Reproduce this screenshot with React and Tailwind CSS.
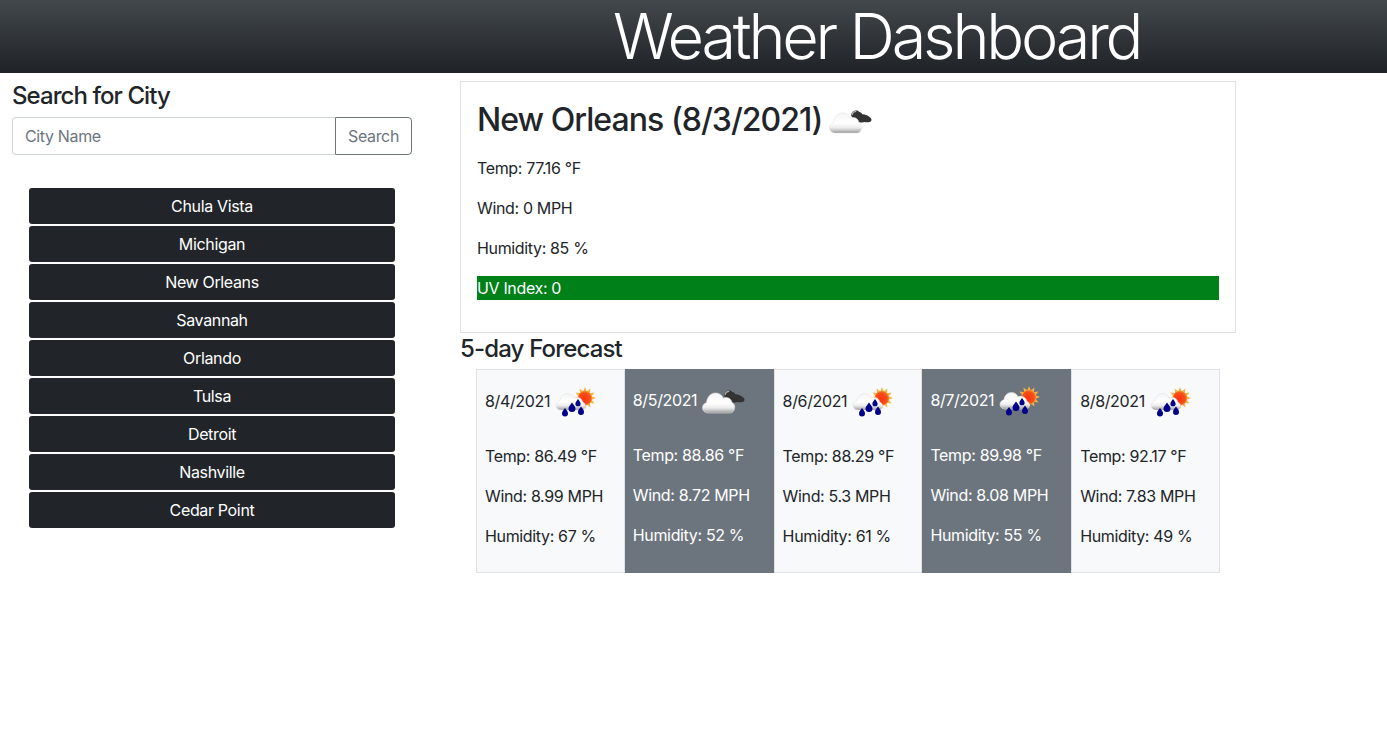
import React from 'react';

const cities = ['Chula Vista', 'Michigan', 'New Orleans', 'Savannah', 'Orlando', 'Tulsa', 'Detroit', 'Nashville', 'Cedar Point'];

const forecast = [
  { date: '8/4/2021', icon: 'rain', temp: '86.49', wind: '8.99', humidity: '67' },
  { date: '8/5/2021', icon: 'cloud', temp: '88.86', wind: '8.72', humidity: '52' },
  { date: '8/6/2021', icon: 'rain', temp: '88.29', wind: '5.3', humidity: '61' },
  { date: '8/7/2021', icon: 'rain', temp: '89.98', wind: '8.08', humidity: '55' },
  { date: '8/8/2021', icon: 'rain', temp: '92.17', wind: '7.83', humidity: '49' },
];

const RAIN_CLOUD = 'M11 29c-3 0-5-2-5-4.500 0-2.500 1.800-4.400 4-4.800 .5-4.200 3.500-7.200 7.500-7.200 3 0 5.500 1.600 6.500 4.400 1-.5 2-.6 3-.5 3 0 5.300 2 5.800 4.900 1.600.5 2.700 2 2.700 3.600 0 2.500-2 4.100-4 4.100z';
const BIG_CLOUD = 'M13 33c-3.200 0-5.500-2.300-5.500-5.200 0-2.600 1.700-4.600 4-5.100 .5-5.700 4.200-9.700 9-9.700 3.600 0 6.500 2 7.800 5.200 1.100-.5 2.200-.7 3.300-.6 2.800.2 4.900 2.300 5.300 5 1.700.6 2.800 2.300 2.800 4.300 0 3.800-2.200 6.100-5 6.100z';

// twelve short rays round the sun
const rays = Array.from({ length: 12 }, (_, i) => (i * 360) / 12);

const Defs = () => (
  <defs>
    <linearGradient id="cloudFill" x1="0" y1="0" x2="0" y2="1">
      <stop offset="0" stopColor="#f4f4f4" />
      <stop offset="0.5" stopColor="#ffffff" />
      <stop offset="0.74" stopColor="#ececec" />
      <stop offset="0.9" stopColor="#bdbdbd" />
      <stop offset="1" stopColor="#8f8f8f" />
    </linearGradient>
    <radialGradient id="sunFill" cx="0.45" cy="0.55" r="0.6">
      <stop offset="0" stopColor="#ff3010" />
      <stop offset="0.7" stopColor="#f4511a" />
      <stop offset="1" stopColor="#f09a30" />
    </radialGradient>
  </defs>
);

const CloudIcon = ({ className }) => (
  <svg viewBox="0 0 55 40" className={className}>
    <Defs />
    <path d="M29 15c.6-2.800 2.800-4.800 5.300-4.500 1.300-.2 2.300.5 3 1.600 1.300.2 2.500 1 3 2.100 2.700-.2 5.800 1.300 8 3.300 1.400 1.400 1.700 3 .4 3.900-1.800 1.100-4.400 1-6.400.6-3.800 1.200-7.600.4-9.600-2.200-1.500-.9-3-2.500-3.700-4.800z" fill="#333333" />
    <path d="M30 15c.5-2 2.200-3.700 4.200-3.700" stroke="#b5b5b5" strokeWidth="1.200" fill="none" />
    <path d={BIG_CLOUD} fill="url(#cloudFill)" stroke="#e3e3e3" strokeWidth="0.6" />
  </svg>
);

const RainIcon = ({ className }) => (
  <svg viewBox="0 0 50 40" className={className}>
    <Defs />
    <g fill="#f6b13f">
      {rays.map((deg) => (
        <path key={deg} d="M33 11L35 6 37 11z" transform={`rotate(${deg} 35 17)`} />
      ))}
    </g>
    <circle cx="35" cy="17" r="7" fill="url(#sunFill)" />
    <path d={RAIN_CLOUD} fill="url(#cloudFill)" stroke="#e3e3e3" strokeWidth="0.6" />
    <g fill="#00008b">
      <path d="M15 27c1.900 2.600 3 3.900 3 5.500a3 3 0 0 1-6 0c0-1.600 1.100-2.900 3-5.500z" />
      <path d="M22 21.500c2.100 2.900 3.500 4.300 3.500 6.100a3.500 3.500 0 0 1-7 0c0-1.800 1.400-3.200 3.500-6.100z" />
      <path d="M28 18c1.600 2.200 2.600 3.300 2.600 4.700a2.600 2.600 0 0 1-5.200 0c0-1.400 1-2.500 2.600-4.700z" />
      <path d="M31 25.500c1.900 2.500 3 3.800 3 5.400a3 3 0 0 1-6 0c0-1.600 1.100-2.900 3-5.400z" />
    </g>
  </svg>
);

const ForecastCard = ({ day, dark }) => {
  const isRain = day.icon === 'rain';
  return (
    <div className={dark ? 'w-[148.8px] shrink-0 px-2 pt-[15px] bg-[#6c757d] text-white' : 'w-[148.8px] shrink-0 px-2 pt-[15px] bg-[#f8f9fa] border border-[#dfe1e5]'}>
      <div className="flex items-center h-[31px] mb-[28px]">
        <span className="shrink-0">{day.date}</span>
        {isRain ? (
          <RainIcon className="w-[50px] h-[40px] shrink-0" />
        ) : (
          <CloudIcon className="w-[55px] h-[40px] -ml-[2px] shrink-0" />
        )}
      </div>
      <p className="mb-4 whitespace-nowrap">Temp: {day.temp} °F</p>
      <p className="mb-4 whitespace-nowrap">Wind: {day.wind} MPH</p>
      <p className="whitespace-nowrap">Humidity: {day.humidity} %</p>
    </div>
  );
};

export default function App() {
  return (
    <div className="min-h-[752px] bg-white text-[#212529] text-base leading-6 tracking-[-0.35px] font-['Inter',sans-serif]">
      <header className="h-[73px] pl-[613px] bg-gradient-to-b from-[#43484d] to-[#1f2327]">
        <h1 className="text-white text-[63px] leading-[73px] font-light tracking-[-3.2px]">Weather Dashboard</h1>
      </header>

      <div className="flex">
        <aside className="w-[460px] shrink-0 pl-3 pt-2">
          <h2 className="text-2xl leading-[29px] font-medium mb-[7px] tracking-[-0.93px]">Search for City</h2>
          <div className="flex w-[400px] h-[38px]">
            <input
              placeholder="City Name"
              className="flex-1 min-w-0 px-3 border border-[#ced4da] border-r-0 rounded-l placeholder:text-[#6c757d] outline-none"
            />
            <button className="w-[77px] border border-[#6c757d] rounded-r text-[#6c757d]">Search</button>
          </div>
          <div className="mt-[33px] ml-[17px] w-[366px] flex flex-col gap-[2px]">
            {cities.map((city) => (
              <button key={city} className="h-9 bg-[#212529] text-white rounded-[3px]">{city}</button>
            ))}
          </div>
        </aside>

        <main className="w-[776px] pt-2">
          <section className="h-[252px] border border-[#dfe1e5] p-4">
            <div className="flex items-center h-[44px] mb-[14px]">
              <h2 className="text-[32px] leading-[38px] font-medium tracking-[-0.95px] shrink-0">New Orleans (8/3/2021)</h2>
              <CloudIcon className="w-[55px] h-[40px] shrink-0" />
            </div>
            <p className="mb-4">Temp: 77.16 °F</p>
            <p className="mb-4">Wind: 0 MPH</p>
            <p className="mb-4">Humidity: 85 %</p>
            <p className="bg-[#008019] text-white">UV Index: 0</p>
          </section>

          <h3 className="text-2xl leading-[29px] font-medium mt-[1px] mb-[6px] tracking-[-0.85px]">5-day Forecast</h3>

          <div className="flex w-[744px] h-[204px] ml-4">
            {forecast.map((day, i) => (
              <ForecastCard key={day.date} day={day} dark={i % 2 === 1} />
            ))}
          </div>
        </main>
      </div>
    </div>
  );
}
